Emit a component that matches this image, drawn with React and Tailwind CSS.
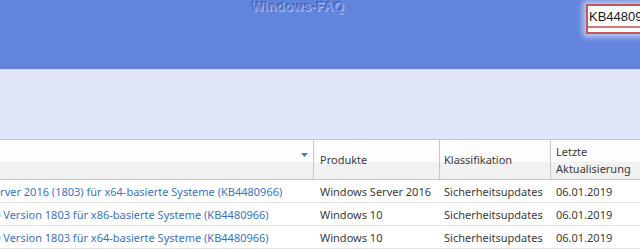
const rows = [
  { title: 'Windows Server 2016 (1803) für x64-basierte Systeme (KB4480966)', product: 'Windows Server 2016' },
  { title: 'Windows 10 Version 1803 für x86-basierte Systeme (KB4480966)', product: 'Windows 10' },
  { title: 'Windows 10 Version 1803 für x64-basierte Systeme (KB4480966)', product: 'Windows 10' },
];

export default function App() {
  return (
    <div className="w-[640px] h-[250px] overflow-hidden bg-white font-['Noto_Sans',sans-serif] text-[11px]">
      {/* blue banner */}
      <div className="relative h-[69px] bg-[#6384dc]">
        <div className="absolute left-[252px] top-[-1px] leading-[16px] text-[13px] font-['Liberation_Sans',sans-serif] font-bold tracking-[0.4px] text-[#7090e2] [text-shadow:-1px_-1px_0_#3b57ab,1px_1px_0_#a9bcf0]">
          Windows-FAQ
        </div>
        <div className="absolute left-[586px] top-[4px] w-[70px] h-[30px] border-2 border-[#c4565d] bg-white shadow-[0_0_6px_3px_rgba(255,255,255,0.6)] flex flex-col">
          <div className="h-[20px] leading-[21px] pl-[1px] text-[13px] text-[#1a1a1a] font-['Liberation_Sans',sans-serif]">KB44809</div>
          <div className="flex-1 border-t-2 border-[#d07a80]" />
        </div>
      </div>
      <div className="h-px bg-[#c9d6f7]" />
      <div className="h-[69px] bg-[#e1e7f9]" />

      {/* table */}
      <div className="border-t border-[#c8c8c8]">
        <div className="grid grid-cols-[314px_126px_111px_89px] h-[40px] bg-[linear-gradient(#fdfdfd_0%,#fdfdfd_55%,#f1f1f1_56%,#f1f1f1_100%)] border-b border-[#c4c4c4] text-[#3a3a3a]">
          <div className="flex items-center justify-end pr-[5px] border-r border-[#c8c8c8]">
            <svg width="7" height="4" viewBox="0 0 7 4" className="-mt-[10px]">
              <path d="M0 0h7L3.5 4z" fill="#3f7dc9" />
            </svg>
          </div>
          <div className="flex items-center pl-[6px] pt-[1px] border-r border-[#c8c8c8]">Produkte</div>
          <div className="flex items-center pl-[4px] pt-[1px] border-r border-[#c8c8c8]">Klassifikation</div>
          <div className="flex flex-col justify-center pl-[5px] pt-[1px] leading-[17px]">
            <span>Letzte</span>
            <span>Aktualisierung</span>
          </div>
        </div>
        {rows.map((row, idx) => (
          <div
            key={idx}
            className="grid grid-cols-[314px_126px_111px_89px] h-[23px] pt-[2px] items-center border-b border-[#e2e2e2] text-[#3a3a3a] whitespace-nowrap"
          >
            <div className="overflow-hidden">
              <span className="block -ml-[62px] text-[#3a72c2]">{row.title}</span>
            </div>
            <div className="pl-[6px]">{row.product}</div>
            <div className="pl-[4px]">Sicherheitsupdates</div>
            <div className="pl-[5px]">06.01.2019</div>
          </div>
        ))}
      </div>
    </div>
  );
}
